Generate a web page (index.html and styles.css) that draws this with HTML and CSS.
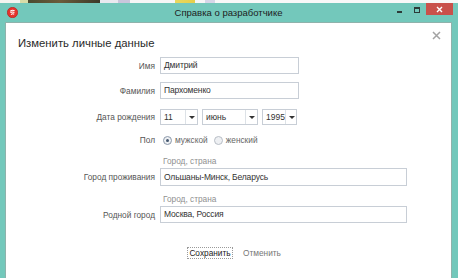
FILE: index.html
```html
<!DOCTYPE html>
<html lang="ru">
<head>
<meta charset="utf-8">
<link rel="stylesheet" href="styles.css">
</head>
<body>
<div class="strip"></div>
<div class="window">
  <div class="titlebar">
    <span class="app-icon"><svg width="11" height="11" viewBox="0 0 11 11"><circle cx="5.5" cy="5.5" r="5.2" fill="#e5322d"/><circle cx="5.5" cy="5.5" r="5.2" fill="none" stroke="#b01c18" stroke-width="0.6"/><path d="M3.3 4.2 Q5.5 2.6 7.6 3.8 M3.4 5.6 Q5.5 4.4 7.4 5.4 M4 7.6 Q5.6 6.2 7.2 7.2" stroke="#fff" stroke-width="1.1" fill="none"/></svg></span>
    <span class="title">Справка о разработчике</span>
    <div class="controls">
      <span class="min"></span>
      <span class="max"></span>
      <span class="close"><svg width="7" height="7" viewBox="0 0 7 7"><path d="M1 1 L6 6 M6 1 L1 6" stroke="#fff" stroke-width="1.4"/></svg></span>
    </div>
  </div>
  <div class="content">
    <div class="head">
      <h1 class="heading">Изменить личные данные</h1>
      <span class="dismiss"><svg width="9" height="9" viewBox="0 0 9 9"><path d="M1 1 L8 8 M8 1 L1 8" stroke="#a3a3a3" stroke-width="1.5"/></svg></span>
    </div>
    <div class="row r-name">
      <span class="label">Имя</span>
      <div class="input short">Дмитрий</div>
    </div>
    <div class="row r-surname">
      <span class="label">Фамилия</span>
      <div class="input short">Пархоменко</div>
    </div>
    <div class="row r-date">
      <span class="label">Дата рождения</span>
      <div class="selects">
        <div class="select s-day"><span class="val">11</span><span class="arrow"></span></div>
        <div class="select s-month"><span class="val">июнь</span><span class="arrow"></span></div>
        <div class="select s-year"><span class="val">1995</span><span class="arrow"></span></div>
      </div>
    </div>
    <div class="row r-gender">
      <span class="label">Пол</span>
      <div class="radios">
        <span class="radio checked"></span><span class="rtext">мужской</span>
        <span class="radio"></span><span class="rtext">женский</span>
      </div>
    </div>
    <div class="row r-hint1">
      <span class="label"></span>
      <span class="hint">Город, страна</span>
    </div>
    <div class="row r-town">
      <span class="label">Город проживания</span>
      <div class="input long tall">Ольшаны-Минск, Беларусь</div>
    </div>
    <div class="row r-hint2">
      <span class="label"></span>
      <span class="hint">Город, страна</span>
    </div>
    <div class="row r-home">
      <span class="label">Родной город</span>
      <div class="input long">Москва, Россия</div>
    </div>
    <div class="buttons">
      <span class="btn-save">Сохранить</span>
      <span class="btn-cancel">Отменить</span>
    </div>
  </div>
</div>
</body>
</html>
```

FILE: styles.css
```css
html, body {
  margin: 0;
  padding: 0;
}
body {
  width: 458px;
  height: 278px;
  overflow: hidden;
  background: #73c8bb;
  font-family: "Liberation Sans", Arial, sans-serif;
}
.strip {
  height: 3px;
  background: linear-gradient(to right,
    #f4f4f0 0, #f4f4f0 20px,
    #d8dca8 20px, #d8dca8 28px,
    #4a4a30 28px, #6b5b3a 60px, #3c3a2a 100px,
    #e9e9ef 100px, #e9e9ef 118px,
    #c9c6dc 118px, #c9c6dc 130px,
    #f6f6f6 130px, #f6f6f6 175px,
    #e8d860 175px, #e6cf4a 195px,
    #f6f6f6 195px, #f6f6f6 205px,
    #d6d6e8 205px, #d6d6e8 215px,
    #f8f8f8 215px, #f8f8f8 458px);
}
.window {
  background: #73c8bb;
  padding: 0 6px 5px 5px;
}
.titlebar {
  height: 19px;
  display: flex;
  align-items: center;
  position: relative;
}
.app-icon {
  display: flex;
  margin-left: 2px;
  margin-top: -1px;
}
.title {
  position: absolute;
  left: 0;
  right: 0;
  text-align: center;
  font-size: 9.5px;
  color: #1d1d1d;
  top: 4px;
  line-height: 12px;
  pointer-events: none;
}
.controls {
  margin-left: auto;
  display: flex;
  align-self: flex-start;
  height: 12px;
}
.min {
  width: 5px;
  height: 2px;
  background: #2c3a38;
  margin-top: 8px;
  margin-right: 12px;
}
.max {
  width: 4px;
  height: 3px;
  border: 1px solid #2c3a38;
  border-top-width: 2px;
  margin-top: 4px;
  margin-right: 6px;
}
.close {
  width: 27px;
  height: 12px;
  background: #c9514b;
  display: flex;
  align-items: center;
  justify-content: center;
  margin-right: -1px;
}
.content {
  height: 249px;
  background: #fff;
  border: 1px solid #8fb2ab;
  padding-top: 13px;
  box-sizing: content-box;
}
.head {
  display: flex;
  align-items: center;
  height: 14px;
  padding-left: 12px;
  padding-right: 10px;
}
.heading {
  margin: 0;
  font-size: 11.3px;
  font-weight: normal;
  color: #2a2a2a;
  line-height: 14px;
}
.dismiss {
  margin-left: auto;
  display: flex;
  margin-top: -15px;
}
.row {
  display: flex;
  align-items: center;
}
.label {
  width: 149px;
  padding-right: 5px;
  text-align: right;
  font-size: 8.3px;
  color: #555;
  flex: none;
}
.input {
  height: 15px;
  border: 1px solid #c8ced6;
  font-size: 8.5px;
  letter-spacing: -0.15px;
  color: #333;
  line-height: 15px;
  padding-left: 3px;
  box-sizing: content-box;
}
.input.short { width: 134px; }
.input.long { width: 242px; }
.input.tall { height: 16px; line-height: 16px; }
.r-name { margin-top: 7px; }
.r-surname { margin-top: 8px; }
.r-date { margin-top: 10px; }
.r-gender { margin-top: 9px; height: 12px; }
.r-hint1 { margin-top: 10px; height: 11px; }
.r-town { margin-top: 1px; }
.r-hint2 { margin-top: 8px; height: 11px; }
.r-home { margin-top: 1px; }
.selects {
  display: flex;
  gap: 4px;
}
.select {
  height: 14px;
  border: 1px solid #c8ced6;
  display: flex;
  font-size: 8.5px;
  color: #333;
}
.select .val {
  flex: 1;
  padding-left: 3px;
  line-height: 14px;
}
.select .arrow {
  width: 11px;
  border-left: 1px solid #dde2e7;
  position: relative;
}
.select .arrow::after {
  content: "";
  position: absolute;
  left: 3px;
  top: 6px;
  border-left: 3px solid transparent;
  border-right: 3px solid transparent;
  border-top: 3px solid #333;
}
.s-day { width: 36px; }
.s-month { width: 54px; }
.s-year { width: 33px; }
.radios {
  display: flex;
  align-items: center;
  font-size: 8.3px;
  color: #666;
}
.radio {
  width: 7px;
  height: 7px;
  border-radius: 50%;
  border: 1px solid #b8bec6;
  background: #eef0f3;
  position: relative;
  margin-left: 3px;
  margin-right: 3px;
}
.radio.checked {
  border-color: #8d9aab;
}
.radio.checked::after {
  content: "";
  position: absolute;
  left: 2px;
  top: 2px;
  width: 3px;
  height: 3px;
  border-radius: 50%;
  background: #44576f;
}
.rtext { margin-right: 3px; }
.hint {
  font-size: 8.3px;
  color: #909090;
  padding-left: 3px;
  line-height: 11px;
}
.buttons {
  display: flex;
  align-items: center;
  margin-top: 24px;
  padding-left: 181px;
  gap: 10px;
}
.btn-save {
  width: 46px;
  height: 12px;
  border: 1px dotted #9a9a9a;
  box-sizing: border-box;
  font-size: 8.3px;
  color: #222;
  text-align: center;
  line-height: 10px;
}
.btn-cancel {
  font-size: 8.3px;
  color: #777;
}
```
